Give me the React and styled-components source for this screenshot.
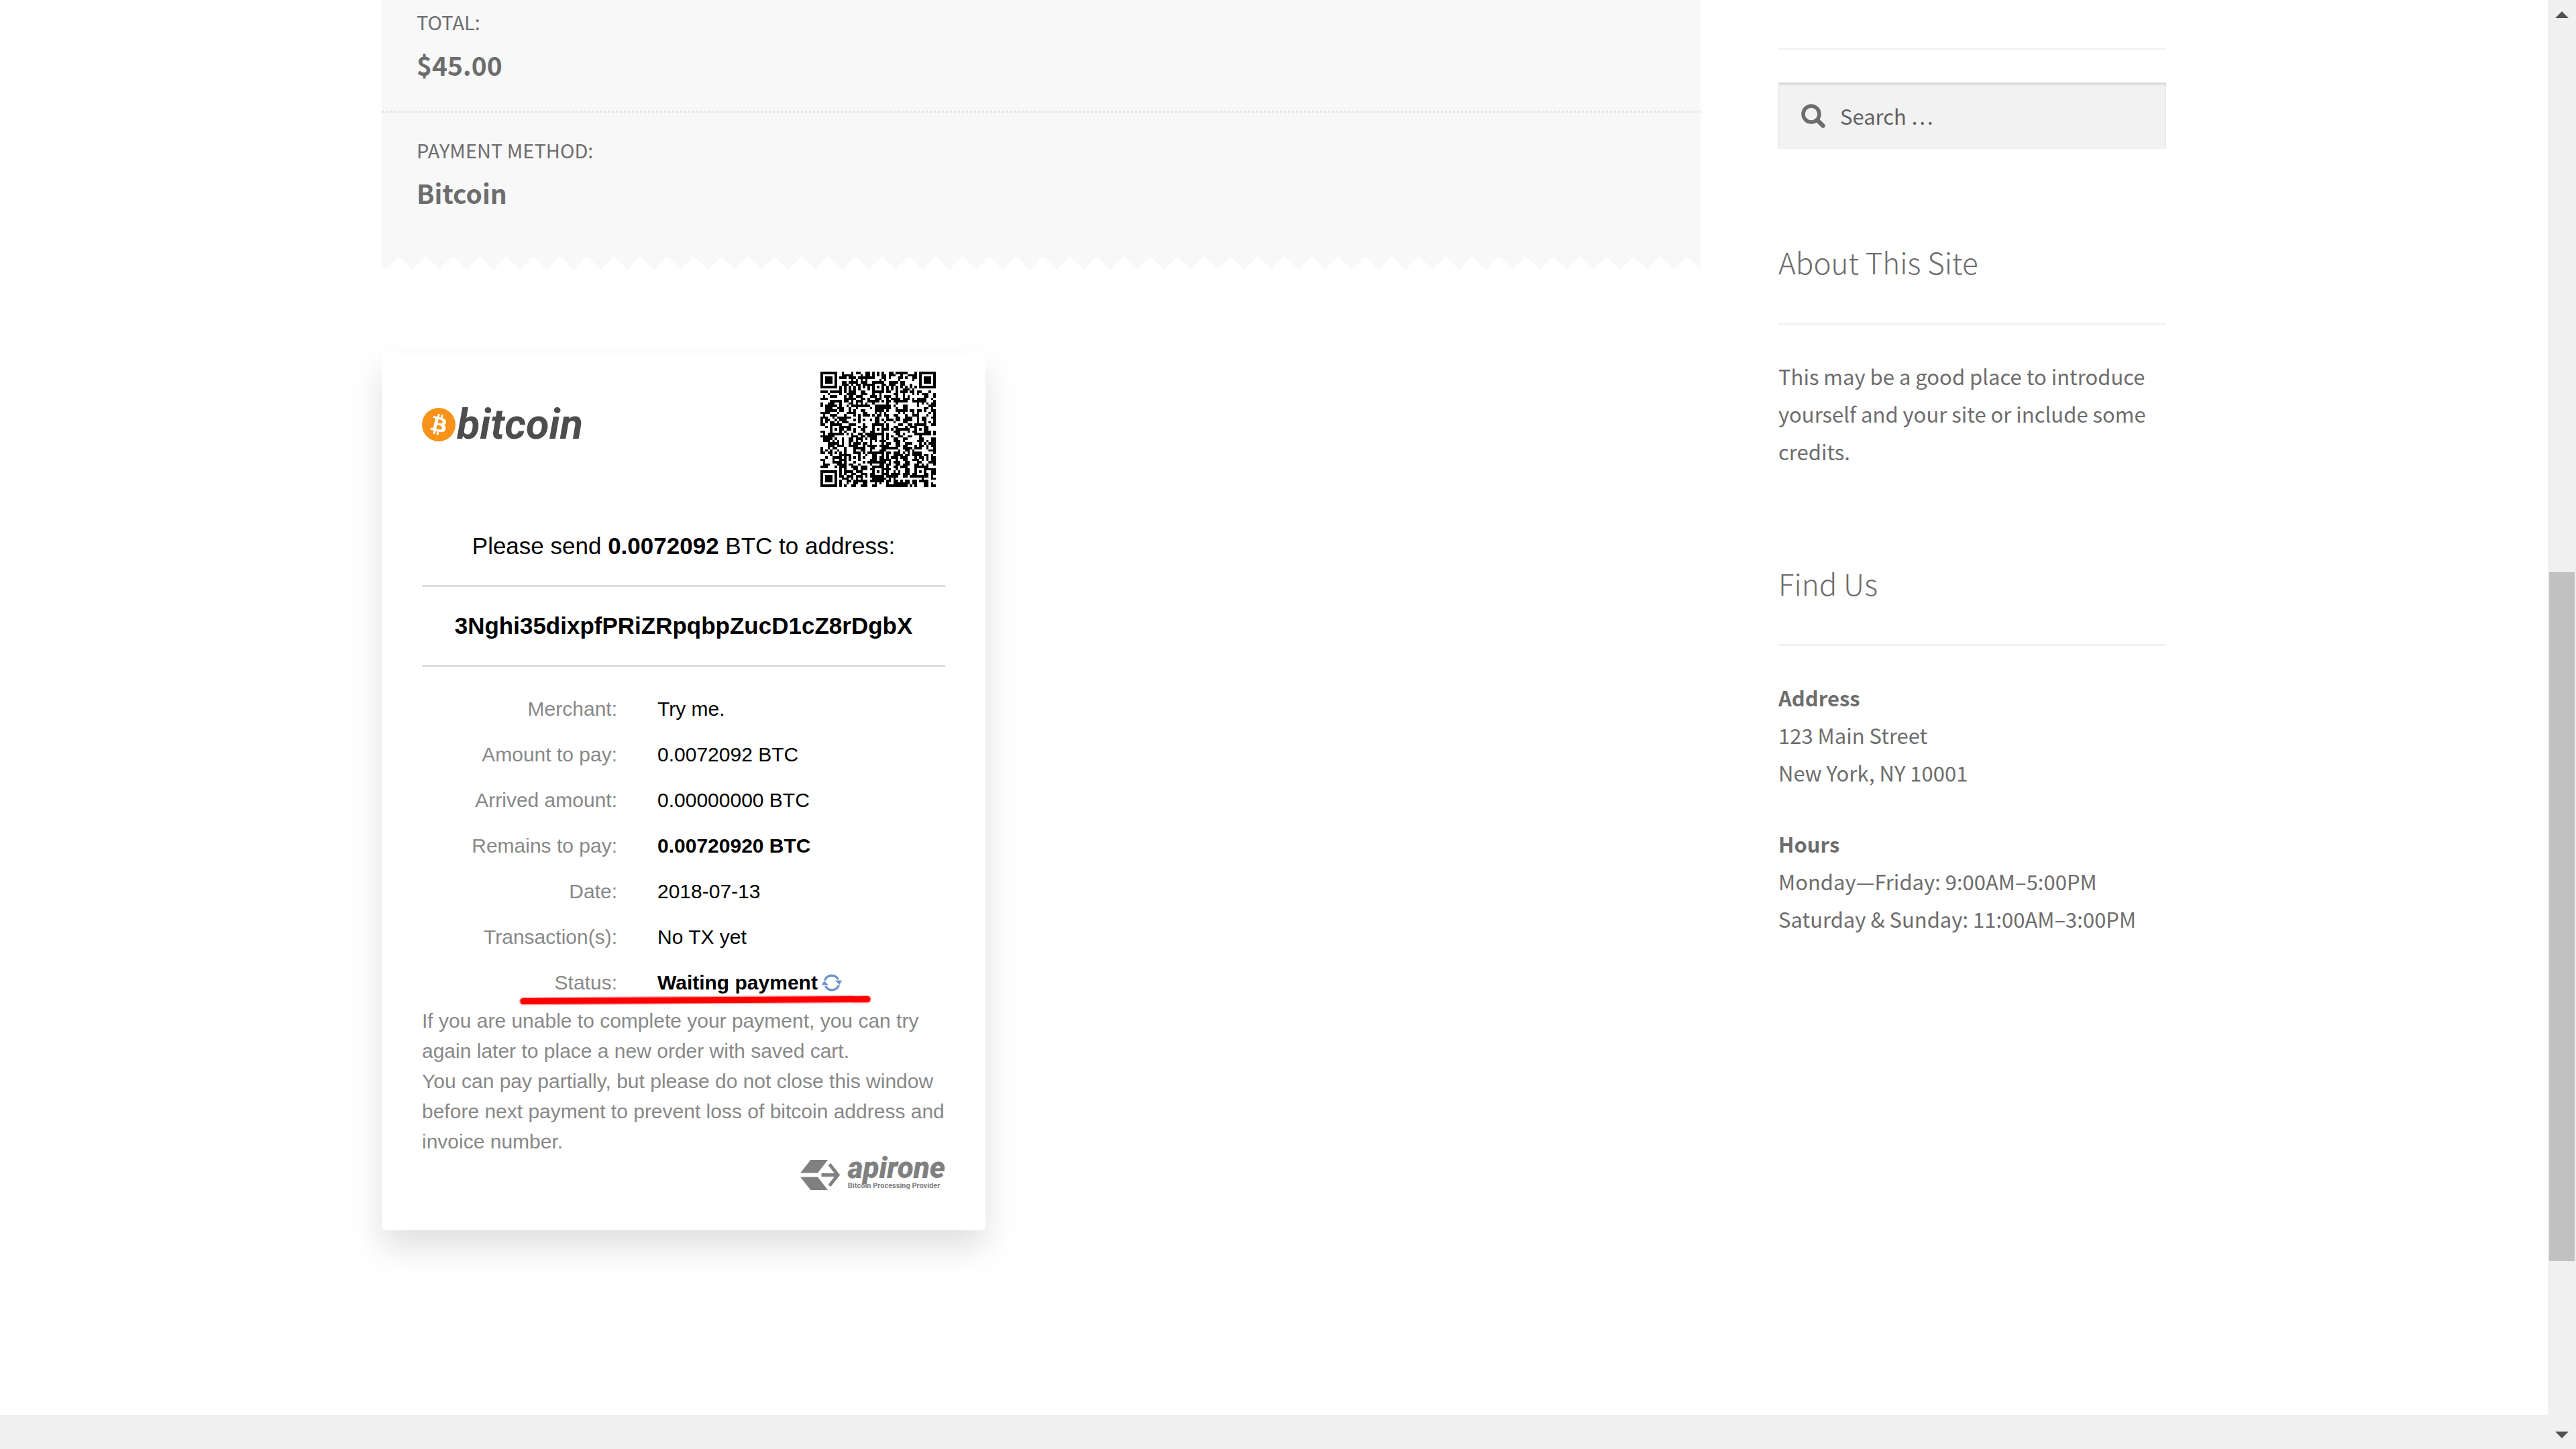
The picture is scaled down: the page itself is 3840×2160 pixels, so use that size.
import React from "react";
import styled, { createGlobalStyle } from "styled-components";

const bodyFont = `"Noto Sans CJK SC", "Noto Sans", sans-serif`;
const cardFont = `"Liberation Sans", Arial, sans-serif`;
const logoFont = `Roboto, "Liberation Sans", sans-serif`;

const GlobalStyle = createGlobalStyle`
  *, *::before, *::after { box-sizing: border-box; }
  body { margin: 0; background: #fff; color: #6d6d6d; font-family: ${bodyFont}; }
  h2, p, ul, dl, dd, address { margin: 0; padding: 0; font-style: normal; }
`;

/* ---------- QR code ---------- */

const QR_SIZE = 49;
const QR_BLOCKS = 2;
const QR_DATA_PER_BLOCK = 97;
const QR_ECC_PER_BLOCK = 24;

function gfMultiply(x, y) {
  let z = 0;
  for (let i = 7; i >= 0; i--) {
    z = (z << 1) ^ ((z >>> 7) * 0x11d);
    z ^= ((y >>> i) & 1) * x;
  }
  return z;
}

function eccFor(data, degree) {
  const divisor = new Array(degree).fill(0);
  divisor[degree - 1] = 1;
  let root = 1;
  for (let i = 0; i < degree; i++) {
    for (let j = 0; j < degree; j++) {
      divisor[j] = gfMultiply(divisor[j], root);
      if (j + 1 < degree) divisor[j] ^= divisor[j + 1];
    }
    root = gfMultiply(root, 2);
  }
  const result = new Array(degree).fill(0);
  data.forEach((byte) => {
    const factor = byte ^ result.shift();
    result.push(0);
    divisor.forEach((d, i) => {
      result[i] ^= gfMultiply(d, factor);
    });
  });
  return result;
}

function encodeQr(text) {
  const bits = [];
  const push = (value, length) => {
    for (let i = length - 1; i >= 0; i--) bits.push((value >>> i) & 1);
  };
  push(4, 4);
  push(text.length, 8);
  for (const ch of text) push(ch.charCodeAt(0), 8);
  push(0, 4);
  while (bits.length % 8) bits.push(0);
  const data = [];
  for (let i = 0; i < bits.length; i += 8) data.push(parseInt(bits.slice(i, i + 8).join(""), 2));
  for (let pad = 0xec; data.length < QR_BLOCKS * QR_DATA_PER_BLOCK; pad ^= 0xec ^ 0x11) data.push(pad);

  const blocks = [];
  for (let b = 0; b < QR_BLOCKS; b++) blocks.push(data.slice(b * QR_DATA_PER_BLOCK, (b + 1) * QR_DATA_PER_BLOCK));
  const eccs = blocks.map((block) => eccFor(block, QR_ECC_PER_BLOCK));
  const codewords = [];
  for (let i = 0; i < QR_DATA_PER_BLOCK; i++) blocks.forEach((block) => codewords.push(block[i]));
  for (let i = 0; i < QR_ECC_PER_BLOCK; i++) eccs.forEach((ecc) => codewords.push(ecc[i]));

  const grid = Array.from({ length: QR_SIZE }, () => new Array(QR_SIZE).fill(null));
  const set = (x, y, dark) => {
    if (x >= 0 && y >= 0 && x < QR_SIZE && y < QR_SIZE) grid[y][x] = !!dark;
  };
  for (let i = 0; i < QR_SIZE; i++) {
    set(6, i, i % 2 === 0);
    set(i, 6, i % 2 === 0);
  }
  [[3, 3], [QR_SIZE - 4, 3], [3, QR_SIZE - 4]].forEach(([cx, cy]) => {
    for (let dy = -4; dy <= 4; dy++)
      for (let dx = -4; dx <= 4; dx++) {
        const d = Math.max(Math.abs(dx), Math.abs(dy));
        set(cx + dx, cy + dy, d !== 2 && d !== 4);
      }
  });
  const centers = [6, 24, 42];
  centers.forEach((cx, i) =>
    centers.forEach((cy, j) => {
      if ((i === 0 && j === 0) || (i === 0 && j === 2) || (i === 2 && j === 0)) return;
      for (let dy = -2; dy <= 2; dy++)
        for (let dx = -2; dx <= 2; dx++) set(cx + dx, cy + dy, Math.max(Math.abs(dx), Math.abs(dy)) !== 1);
    })
  );
  const format = (1 << 3) | 0;
  let rem = format;
  for (let i = 0; i < 10; i++) rem = (rem << 1) ^ ((rem >>> 9) * 0x537);
  const fbits = ((format << 10) | rem) ^ 0x5412;
  const fb = (i) => (fbits >>> i) & 1;
  for (let i = 0; i <= 5; i++) set(8, i, fb(i));
  set(8, 7, fb(6));
  set(8, 8, fb(7));
  set(7, 8, fb(8));
  for (let i = 9; i < 15; i++) set(14 - i, 8, fb(i));
  for (let i = 0; i < 8; i++) set(QR_SIZE - 1 - i, 8, fb(i));
  for (let i = 8; i < 15; i++) set(8, QR_SIZE - 15 + i, fb(i));
  set(8, QR_SIZE - 8, 1);
  let vrem = 8;
  for (let i = 0; i < 12; i++) vrem = (vrem << 1) ^ ((vrem >>> 11) * 0x1f25);
  const vbits = (8 << 12) | vrem;
  for (let i = 0; i < 18; i++) {
    const a = QR_SIZE - 11 + (i % 3);
    const b = Math.floor(i / 3);
    set(a, b, (vbits >>> i) & 1);
    set(b, a, (vbits >>> i) & 1);
  }
  let n = 0;
  for (let right = QR_SIZE - 1; right >= 1; right -= 2) {
    if (right === 6) right = 5;
    for (let v = 0; v < QR_SIZE; v++)
      for (let j = 0; j < 2; j++) {
        const x = right - j;
        const y = ((right + 1) & 2) === 0 ? QR_SIZE - 1 - v : v;
        if (grid[y][x] === null) {
          const bit = n < codewords.length * 8 ? (codewords[n >>> 3] >>> (7 - (n & 7))) & 1 : 0;
          grid[y][x] = !!(bit ^ ((x + y) % 2 === 0 ? 1 : 0));
          n++;
        }
      }
  }
  return grid;
}

const qrPath = encodeQr(
  "bitcoin:3Nghi35dixpfPRiZRpqbpZucD1cZ8rDgbX?amount=0.0072092&label=Try%20me.&message=Please%20send%200.0072092%20BTC%20to%20complete%20your%20order%20at%20Try%20me.%20store"
)
  .flatMap((row, y) => row.map((dark, x) => (dark ? `M${x} ${y}h1v1h-1z` : "")))
  .join("");

/* ---------- Layout ---------- */

const Window = styled.div`
  display: flex;
  min-height: 100vh;
`;

const Page = styled.div`
  flex: 1;
  min-width: 0;
  display: flex;
  flex-direction: column;
`;

const Container = styled.div`
  flex: 1;
  display: flex;
  align-items: flex-start;
  gap: 116px;
  width: 100%;
  max-width: 2660px;
  margin: 0 auto;
`;

const Main = styled.main`
  flex: 1;
  min-width: 0;
`;

const Sidebar = styled.aside`
  width: 578px;
  padding-top: 71px;
`;

const Footer = styled.footer`
  height: 51px;
  background: #f0f0f0;
`;

/* ---------- Order overview ---------- */

const Overview = styled.dl`
  margin-top: -23px;
  margin-bottom: 124px;
  padding-bottom: 46px;
  background:
    conic-gradient(from -45deg at 50% 100%, #f8f8f8 90deg, transparent 0) -14px 100% / 40px 20px repeat-x,
    linear-gradient(#f8f8f8, #f8f8f8) 0 0 / 100% calc(100% - 20px) no-repeat;
`;

const OverviewItem = styled.div`
  padding: 31px 52px 29px;
  & + & {
    border-top: 3px dotted #e3e3e3;
  }
`;

const OverviewLabel = styled.dt`
  font-size: 29px;
  line-height: 48px;
  text-transform: uppercase;
`;

const OverviewValue = styled.dd`
  font-size: 39px;
  font-weight: 700;
  line-height: 80px;
`;

/* ---------- Payment card ---------- */

const Card = styled.section`
  width: 900px;
  max-width: 100%;
  padding: 28px 60px 60px;
  border-radius: 6px;
  background: #fff;
  box-shadow: 0 25px 50px rgba(0, 0, 0, 0.13);
  color: #000;
  font-family: ${cardFont};
`;

const CardHead = styled.header`
  display: flex;
  align-items: center;
  justify-content: space-between;
  padding-right: 14px;
  margin-bottom: 30px;
`;

const BitcoinBrand = styled.div`
  display: flex;
  align-items: center;
  gap: 2px;
  height: 50px;
  margin-bottom: 14px;
  color: #4d4d4d;
  font: italic 700 63px/50px ${logoFont};
`;

const CardLine = styled.p`
  display: flex;
  align-items: center;
  justify-content: center;
  height: 119px;
  border-bottom: 3px solid #ddd;
  font-size: 35px;
  font-weight: ${(p) => (p.$bold ? 700 : 400)};
  white-space: pre;
`;

const Details = styled.table`
  width: 100%;
  margin-top: 29px;
  border-collapse: collapse;
  font-size: 30px;
`;

const DetailName = styled.th`
  width: 291px;
  height: 68px;
  padding: 0;
  color: #888;
  font-weight: 400;
  text-align: right;
`;

const DetailValue = styled.td`
  padding: 0 0 0 60px;
  font-weight: ${(p) => (p.$bold ? 700 : 400)};
`;

const Status = styled.span`
  position: relative;
  display: inline-flex;
  align-items: center;
  gap: 6px;
`;

const Refresh = styled.button`
  display: flex;
  padding: 0;
  border: 0;
  background: none;
  cursor: pointer;
`;

const Marker = styled.svg`
  position: absolute;
  left: -206px;
  top: 33px;
`;

const Notes = styled.p`
  color: #888;
  font-size: 30px;
  line-height: 45px;
`;

const Provider = styled.a`
  display: flex;
  justify-content: flex-end;
  gap: 12px;
  height: 50px;
  color: #808080;
  text-decoration: none;
`;

const ProviderText = styled.span`
  display: flex;
  flex-direction: column;
  font-family: ${logoFont};
  font-weight: 700;
`;

const ProviderName = styled.span`
  font-size: 44px;
  font-weight: 900;
  line-height: 34px;
  font-style: italic;
`;

const ProviderTag = styled.span`
  font-size: 11px;
  line-height: 20px;
`;

/* ---------- Sidebar ---------- */

const Widget = styled.section`
  border-top: 3px solid #f2f2f2;
  padding-top: 49px;
`;

const SearchBox = styled.form`
  display: flex;
  align-items: center;
  gap: 22px;
  height: 99px;
  padding-left: 34px;
  background: #f2f2f2;
  box-shadow: inset 0 3px 3px rgba(0, 0, 0, 0.125);
`;

const SearchInput = styled.input`
  flex: 1;
  min-width: 0;
  padding: 0;
  border: 0;
  outline: 0;
  background: none;
  color: #6d6d6d;
  font: 400 31px/56px ${bodyFont};
  &::placeholder {
    color: #616161;
    opacity: 1;
  }
`;

const WidgetTitle = styled.h2`
  padding: 132px 0 55px;
  font-size: 44px;
  font-weight: 300;
  line-height: 72px;
`;

const WidgetText = styled.p`
  font-size: 31px;
  line-height: 56px;
  & + & {
    margin-top: 50px;
  }
`;

/* ---------- Scroll bar ---------- */

const ScrollTrack = styled.div`
  display: flex;
  flex-direction: column;
  align-items: center;
  width: 42px;
  background: #f0f0f0;
`;

const ScrollButton = styled.button`
  display: flex;
  align-items: center;
  justify-content: center;
  width: 42px;
  height: 43px;
  padding: 0;
  border: 0;
  background: none;
`;

const ScrollThumb = styled.div`
  width: 38px;
  height: 1027px;
  margin: 810px 0 auto;
  background: #c1c1c1;
`;

const details = [
  ["Merchant:", "Try me."],
  ["Amount to pay:", "0.0072092 BTC"],
  ["Arrived amount:", "0.00000000 BTC"],
  ["Remains to pay:", "0.00720920 BTC", true],
  ["Date:", "2018-07-13"],
  ["Transaction(s):", "No TX yet"],
];

function BitcoinMark() {
  return (
    <svg width="50" height="50" viewBox="0 0 64 64" aria-hidden="true">
      <circle cx="32" cy="32" r="32" fill="#f7931a" />
      <path
        fill="#fff"
        d="M46.1 27.44c.64-4.26-2.6-6.55-7.03-8.07l1.44-5.76-3.51-.87-1.4 5.61c-.92-.23-1.87-.45-2.81-.66l1.41-5.65-3.51-.87-1.44 5.76c-.76-.17-1.51-.35-2.24-.53l-4.84-1.21-.93 3.75s2.6.6 2.55.63c1.42.36 1.68 1.3 1.63 2.04l-3.94 15.79c-.17.43-.62 1.08-1.61.83.03.05-2.55-.63-2.55-.63l-1.74 4.02 4.57 1.14c.85.21 1.68.44 2.5.64l-1.45 5.83 3.51.88 1.44-5.77c.96.26 1.89.5 2.8.73l-1.44 5.74 3.51.88 1.45-5.82c5.99 1.13 10.49.68 12.39-4.74 1.53-4.36-.08-6.88-3.23-8.52 2.3-.53 4.03-2.04 4.49-5.16zm-8.02 11.25c-1.09 4.36-8.43 2-10.82 1.41l1.93-7.75c2.38.59 10.01 1.77 8.89 6.34zm1.08-11.31c-.99 3.97-7.1 1.95-9.08 1.46l1.75-7.03c1.98.49 8.37 1.41 7.33 5.57z"
      />
    </svg>
  );
}

export default function App() {
  return (
    <>
      <GlobalStyle />
      <Window>
        <Page>
          <Container>
            <Main>
              <Overview>
                <OverviewItem>
                  <OverviewLabel>Total:</OverviewLabel>
                  <OverviewValue>$45.00</OverviewValue>
                </OverviewItem>
                <OverviewItem>
                  <OverviewLabel>Payment method:</OverviewLabel>
                  <OverviewValue>Bitcoin</OverviewValue>
                </OverviewItem>
              </Overview>

              <Card>
                <CardHead>
                  <BitcoinBrand>
                    <BitcoinMark />
                    bitcoin
                  </BitcoinBrand>
                  <svg width="172" height="172" viewBox="0 0 49 49" shapeRendering="crispEdges" role="img" aria-label="Payment QR code">
                    <path d={qrPath} fill="#000" />
                  </svg>
                </CardHead>
                <CardLine>
                  {"Please send "}
                  <strong>0.0072092</strong>
                  {" BTC to address:"}
                </CardLine>
                <CardLine $bold>3Nghi35dixpfPRiZRpqbpZucD1cZ8rDgbX</CardLine>
                <Details>
                  <tbody>
                    {details.map(([name, value, bold]) => (
                      <tr key={name}>
                        <DetailName scope="row">{name}</DetailName>
                        <DetailValue $bold={bold}>{value}</DetailValue>
                      </tr>
                    ))}
                    <tr>
                      <DetailName scope="row">Status:</DetailName>
                      <DetailValue $bold>
                        <Status>
                          Waiting payment
                          <Refresh type="button" aria-label="Refresh status">
                            <svg width="30" height="30" viewBox="0 0 30 30" aria-hidden="true">
                              <path d="M4.5 11.5A11 11 0 0 1 24.5 10M25.5 18.5A11 11 0 0 1 5.5 20" fill="none" stroke="#6c93c8" strokeWidth="3.4" />
                              <path d="M20 11.5h10L26.5 18zM10 18.5H0L3.5 12z" fill="#6c93c8" />
                            </svg>
                          </Refresh>
                          <Marker width="526" height="20" viewBox="0 0 526 20" aria-hidden="true">
                            <path d="M6 11.5L519 8.5" stroke="#f00" strokeOpacity="0.35" strokeWidth="12" strokeLinecap="round" />
                            <path d="M6 11.5L519 8.5" stroke="#f00" strokeWidth="9" strokeLinecap="round" />
                          </Marker>
                        </Status>
                      </DetailValue>
                    </tr>
                  </tbody>
                </Details>
                <Notes>
                  If you are unable to complete your payment, you can try again later to place a new order with saved cart.
                  <br />
                  You can pay partially, but please do not close this window before next payment to prevent loss of bitcoin
                  address and invoice number.
                </Notes>
                <Provider href="#">
                  <svg width="59" height="50" viewBox="0 0 59 50" fill="currentColor" aria-hidden="true">
                    <path d="M15.5 5H41L26 24.5H0zM0 30.5H26L41 50H15.5z" />
                    <path d="M31.5 27.5H53M43.5 11.5L56 27.5L43.5 43.5" fill="none" stroke="currentColor" strokeWidth="5" />
                  </svg>
                  <ProviderText>
                    <ProviderName>apirone</ProviderName>
                    <ProviderTag>Bitcoin Processing Provider</ProviderTag>
                  </ProviderText>
                </Provider>
              </Card>
            </Main>

            <Sidebar>
              <Widget>
                <SearchBox role="search">
                  <svg width="36" height="36" viewBox="0 0 36 36" fill="none" stroke="#6d6d6d" aria-hidden="true">
                    <circle cx="15" cy="15" r="12" strokeWidth="5.5" />
                    <path d="M24 24l8.5 8.5" strokeWidth="6.5" strokeLinecap="round" />
                  </svg>
                  <SearchInput type="search" placeholder="Search …" aria-label="Search for:" />
                </SearchBox>
              </Widget>
              <WidgetTitle>About This Site</WidgetTitle>
              <Widget>
                <WidgetText>This may be a good place to introduce yourself and your site or include some credits.</WidgetText>
              </Widget>
              <WidgetTitle>Find Us</WidgetTitle>
              <Widget>
                <WidgetText>
                  <strong>Address</strong>
                  <br />
                  123 Main Street
                  <br />
                  New York, NY 10001
                </WidgetText>
                <WidgetText>
                  <strong>Hours</strong>
                  <br />
                  Monday—Friday: 9:00AM–5:00PM
                  <br />
                  Saturday &amp; Sunday: 11:00AM–3:00PM
                </WidgetText>
              </Widget>
            </Sidebar>
          </Container>
          <Footer />
        </Page>
        <ScrollTrack>
          <ScrollButton type="button" aria-label="Scroll up">
            <svg width="20" height="10" viewBox="0 0 20 10" aria-hidden="true">
              <path d="M10 0l10 10H0z" fill="#505050" />
            </svg>
          </ScrollButton>
          <ScrollThumb />
          <ScrollButton type="button" aria-label="Scroll down">
            <svg width="20" height="10" viewBox="0 0 20 10" aria-hidden="true">
              <path d="M10 10L0 0h20z" fill="#505050" />
            </svg>
          </ScrollButton>
        </ScrollTrack>
      </Window>
    </>
  );
}
